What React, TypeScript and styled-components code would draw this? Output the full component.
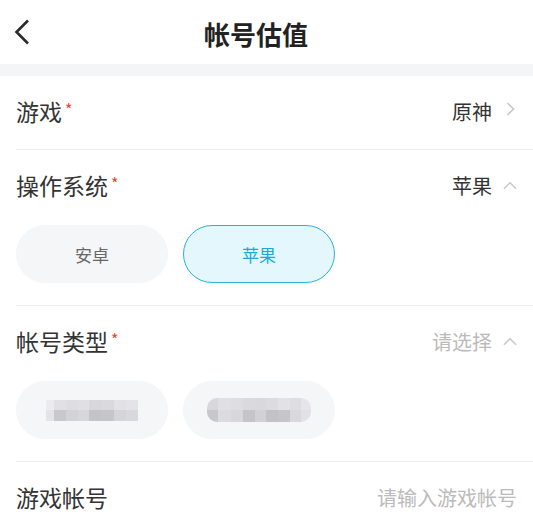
import React from "react";
import styled, { createGlobalStyle } from "styled-components";

const Global = createGlobalStyle`
  html, body { margin: 0; padding: 0; background: #ffffff; }
  body { font-family: "Noto Sans CJK SC", "Noto Sans", sans-serif; color: #333333; }
  * { box-sizing: border-box; }
`;

const Page = styled.div`
  width: 533px;
  height: 529px;
  overflow: hidden;
  background: #ffffff;
`;

const Header = styled.header`
  height: 64px;
  display: flex;
  align-items: center;
`;

const BackButton = styled.button`
  width: 48px;
  height: 64px;
  padding: 0 0 0 14px;
  margin: 0;
  border: none;
  background: transparent;
  display: flex;
  align-items: center;
  cursor: pointer;
`;

const Title = styled.h1`
  flex: 1;
  margin: 0;
  padding-top: 4px;
  text-align: center;
  font-size: 26px;
  font-weight: 700;
  line-height: 1;
  color: #222222;
`;

const Spacer = styled.div`
  width: 69px;
`;

const Band = styled.div`
  height: 12px;
  background: #f4f5f7;
`;

const Section = styled.section<{ $last?: boolean }>`
  margin-left: 16px;
  padding-right: 16px;
  border-bottom: ${(p) => (p.$last ? "none" : "1px solid #eeeeee")};
`;

const Row = styled.div`
  height: 73px;
  padding-bottom: 2px;
  display: flex;
  align-items: center;
  justify-content: space-between;
`;

const Label = styled.div`
  font-size: 23px;
  line-height: 1;
  color: #333333;
  white-space: nowrap;
`;

const Star = styled.span`
  margin-left: 3px;
  font-size: 16px;
  color: #f0412c;
  vertical-align: 5px;
`;

const Value = styled.div<{ $placeholder?: boolean }>`
  display: flex;
  align-items: center;
  gap: 11px;
  font-size: 20px;
  line-height: 1;
  color: ${(p) => (p.$placeholder ? "#bbbbbb" : "#333333")};
`;

const IconBox = styled.span<{ $lift?: number }>`
  width: 14px;
  display: flex;
  justify-content: center;
  align-items: center;
  margin-bottom: ${(p) => p.$lift ?? 0}px;
`;

const Options = styled.div`
  display: flex;
  gap: 15px;
  padding: 2px 0 22px;
`;

const Option = styled.button<{ $selected?: boolean }>`
  width: 152px;
  height: 58px;
  margin: 0;
  padding: 0;
  border-radius: 29px;
  border: 1.6px solid ${(p) => (p.$selected ? "#28b1df" : "#f5f6f8")};
  background: ${(p) => (p.$selected ? "#e4f7fd" : "#f5f6f8")};
  color: ${(p) => (p.$selected ? "#1ea8d6" : "#666666")};
  font-family: "Noto Sans CJK SC", "Noto Sans", sans-serif;
  font-size: 17px;
  display: flex;
  align-items: center;
  justify-content: center;
  cursor: pointer;
`;

const Mosaic = styled.div<{ $cols: string; $round?: boolean }>`
  display: grid;
  grid-template-columns: ${(p) => p.$cols};
  grid-template-rows: repeat(2, ${(p) => (p.$round ? "12px" : "10.5px")});
  border-radius: ${(p) => (p.$round ? "10px" : "0")};
  overflow: hidden;
  filter: blur(0.5px);
`;

const Cell = styled.span<{ $shade: string }>`
  background: ${(p) => p.$shade};
`;

const ChevronLeft = () => (
  <svg width="16" height="26" viewBox="0 0 16 26" fill="none">
    <polyline points="14,1.5 2.5,13 14,24.5" stroke="#2b2b2b" strokeWidth="2.6" strokeLinecap="butt" strokeLinejoin="miter" />
  </svg>
);

const ChevronRight = () => (
  <svg width="9" height="14" viewBox="0 0 9 14" fill="none">
    <polyline points="1.5,1 7.5,7 1.5,13" stroke="#c8c8c8" strokeWidth="1.6" />
  </svg>
);

const ChevronUp = () => (
  <svg width="15" height="9" viewBox="0 0 15 9" fill="none">
    <polyline points="1,8 7.5,1.5 14,8" stroke="#c8c8c8" strokeWidth="1.6" />
  </svg>
);

const mosaicA = {
  cols: "8px 12px 12px 11px 12px 13px 12px 12px",
  top: ["#ececf0", "#e1e1e5", "#dedee2", "#e0e0e4", "#d8d8dc", "#dadade", "#e2e2e6", "#e4e4e8"],
  bottom: ["#e4e4e8", "#c9c9cd", "#d3d3d7", "#d7d7db", "#c4c4c8", "#c6c6ca", "#d5d5d9", "#d9d9dd"],
};

const mosaicB = {
  cols: "11px 13px 12px 12px 11px 12px 12px 11px 10px",
  top: ["#d8d8dc", "#e0e0e4", "#dedee2", "#dadade", "#d9d9dd", "#dcdce0", "#e2e2e6", "#dedee2", "#e6e6ea"],
  bottom: ["#c8c8cc", "#dcdce0", "#d8d8dc", "#c5c5c9", "#d2d2d6", "#c3c3c7", "#c6c6ca", "#d9d9dd", "#e2e2e6"],
};

const Blurred = ({ data, round }: { data: typeof mosaicA; round?: boolean }) => (
  <Mosaic $cols={data.cols} $round={round}>
    {data.top.map((c, i) => (
      <Cell key={"t" + i} $shade={c} />
    ))}
    {data.bottom.map((c, i) => (
      <Cell key={"b" + i} $shade={c} />
    ))}
  </Mosaic>
);

export default function App() {
  return (
    <Page>
      <Global />
      <Header>
        <BackButton aria-label="返回">
          <ChevronLeft />
        </BackButton>
        <Title>帐号估值</Title>
        <Spacer />
      </Header>
      <Band />

      <Section>
        <Row>
          <Label>
            游戏<Star>*</Star>
          </Label>
          <Value>
            原神
            <IconBox $lift={5}>
              <ChevronRight />
            </IconBox>
          </Value>
        </Row>
      </Section>

      <Section>
        <Row>
          <Label>
            操作系统<Star>*</Star>
          </Label>
          <Value>
            苹果
            <IconBox>
              <ChevronUp />
            </IconBox>
          </Value>
        </Row>
        <Options>
          <Option>安卓</Option>
          <Option $selected>苹果</Option>
        </Options>
      </Section>

      <Section>
        <Row>
          <Label>
            帐号类型<Star>*</Star>
          </Label>
          <Value $placeholder>
            请选择
            <IconBox>
              <ChevronUp />
            </IconBox>
          </Value>
        </Row>
        <Options>
          <Option>
            <Blurred data={mosaicA} />
          </Option>
          <Option>
            <Blurred data={mosaicB} round />
          </Option>
        </Options>
      </Section>

      <Section $last>
        <Row>
          <Label>游戏帐号</Label>
          <Value $placeholder>请输入游戏帐号</Value>
        </Row>
      </Section>
    </Page>
  );
}
